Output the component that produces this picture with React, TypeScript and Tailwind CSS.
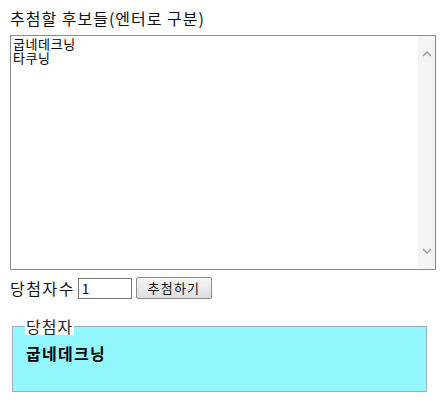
import React from "react";

const KR = { fontFamily: '"Noto Sans CJK KR", "Noto Sans", sans-serif' };

export default function App() {
  return (
    <div className="w-[445px] h-[410px] bg-white text-black px-[10px] pt-[8px]" style={KR}>
      <div className="text-[16px] tracking-[1px] leading-[20px] text-[#111]">추첨할 후보들(엔터로 구분)</div>
      <div className="mt-[7px] w-[426px] h-[235px] border border-[#8a8a8a] flex bg-white">
        <textarea
          className="flex-1 resize-none outline-none border-0 px-[2px] pt-[1px] text-[13px] tracking-[0.6px] leading-[14px] text-black overflow-hidden"
          style={KR}
          defaultValue={"굽네데크닝\n타쿠닝"}
        />
        <div className="w-[17px] bg-[#f4f4f4] flex flex-col justify-between items-center py-[14px]">
          <svg width="10" height="7" viewBox="0 0 10 7">
            <path d="M1 6 L5 2 L9 6" fill="none" stroke="#a3a3a3" strokeWidth="1.6" />
          </svg>
          <svg width="10" height="7" viewBox="0 0 10 7">
            <path d="M1 1 L5 5 L9 1" fill="none" stroke="#a3a3a3" strokeWidth="1.6" />
          </svg>
        </div>
      </div>
      <div className="mt-[7px] flex items-center h-[22px]">
        <span className="text-[16px] tracking-[1.5px] leading-[20px] text-[#111]">당첨자수</span>
        <input
          className="ml-[3px] w-[54px] h-[21px] border border-[#767676] px-[3px] text-[13px] outline-none"
          style={KR}
          defaultValue="1"
        />
        <button
          className="ml-[4px] w-[76px] h-[22px] border border-[#8c8c8c] rounded-[2px] bg-gradient-to-b from-[#f6f6f6] to-[#dedede] text-[13px] tracking-[1.2px] leading-[18px] text-[#111]"
          style={KR}
        >
          추첨하기
        </button>
      </div>
      <fieldset className="mt-[19px] ml-[2px] w-[415px] h-[74px] border border-[#a2aeb8] bg-[#93f8fd] px-[13px] m-0 relative">
        <legend className="-ml-[1px] px-[1px] text-[16px] tracking-[1px] leading-[17px] text-[#222] bg-white">당첨자</legend>
        <div className="mt-[8px] text-[16px] font-bold tracking-[1.3px] leading-[20px] text-black">굽네데크닝</div>
      </fieldset>
    </div>
  );
}
